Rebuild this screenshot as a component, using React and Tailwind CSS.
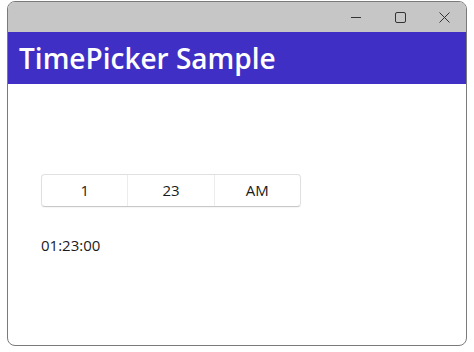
const App = () => {
  return (
    <div className="w-[474px] h-[352px] bg-white pt-px pl-[7px] pr-[7px]" style={{ fontFamily: '"Open Sans", "Noto Sans", sans-serif' }}>
      <div className="w-[460px] h-[345px] border border-[#7a7a7a] rounded-lg overflow-hidden flex flex-col bg-white">
        <div className="h-[30px] bg-[#c6c6c6] flex justify-end items-center shrink-0">
          <div className="w-[44px] h-full flex items-center justify-center">
            <svg width="10" height="10" viewBox="0 0 10 10">
              <path d="M0 5.5h10" stroke="#333" strokeWidth="1" />
            </svg>
          </div>
          <div className="w-[44px] h-full flex items-center justify-center">
            <svg width="11" height="11" viewBox="0 0 11 11">
              <rect x="0.5" y="0.5" width="10" height="10" rx="1.5" fill="none" stroke="#333" strokeWidth="1" />
            </svg>
          </div>
          <div className="w-[44px] h-full flex items-center justify-center">
            <svg width="11" height="11" viewBox="0 0 11 11">
              <path d="M0.5 0.5l10 10M10.5 0.5l-10 10" stroke="#333" strokeWidth="1" />
            </svg>
          </div>
        </div>
        <div className="h-[52px] bg-[#3f2fc4] flex items-center pl-[11px] shrink-0">
          <span className="text-white text-[28px] font-semibold leading-none">TimePicker Sample</span>
        </div>
        <div className="flex-1 pl-[33px] pt-[90px]">
          <div className="w-[260px] h-[33px] flex border border-[#e0e0e0] border-b-[#c8c8c8] rounded-[4px] bg-white text-[15px] text-[#1a1a1a] shadow-[0_1px_1px_rgba(0,0,0,0.04)]">
            <div className="flex-1 flex items-center justify-center border-r border-[#ececec]">1</div>
            <div className="flex-1 flex items-center justify-center border-r border-[#ececec]">23</div>
            <div className="flex-1 flex items-center justify-center">AM</div>
          </div>
          <div className="mt-[28px] text-[15px] text-[#1a1a1a] leading-[20px]">01:23:00</div>
        </div>
      </div>
    </div>
  );
};

export default App;
